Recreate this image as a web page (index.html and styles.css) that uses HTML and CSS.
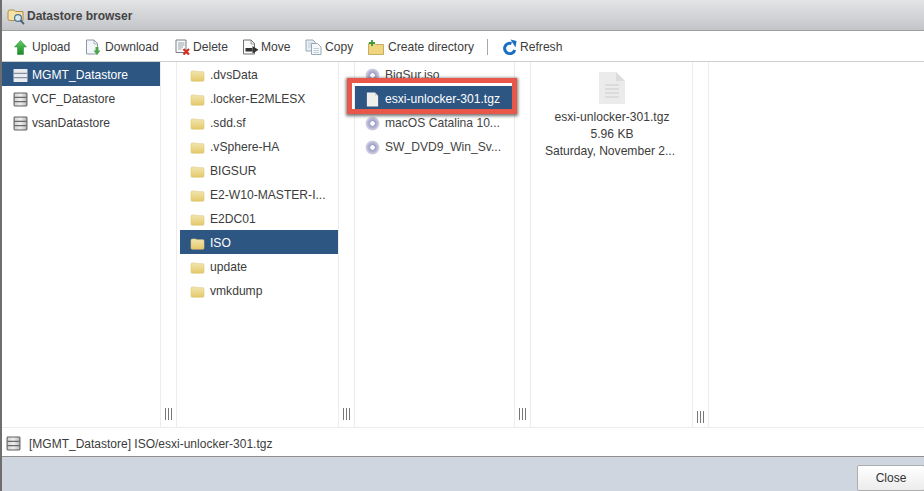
FILE: index.html
```html
<!DOCTYPE html>
<html lang="en">
<head>
<meta charset="utf-8">
<title>Datastore browser</title>
<link rel="stylesheet" href="styles.css">
</head>
<body>
<svg class="defs" width="0" height="0" aria-hidden="true">
  <defs>
    <linearGradient id="ds-fill" x1="0" x2="1" y1="0" y2="0">
      <stop offset="0" stop-color="#d0d0d0"/>
      <stop offset=".5" stop-color="#eeeeee"/>
      <stop offset="1" stop-color="#b8b8b8"/>
    </linearGradient>
    <linearGradient id="folder-fill" x1="0" x2="0" y1="0" y2="1">
      <stop offset="0" stop-color="#f3e6b0"/>
      <stop offset="1" stop-color="#e4c869"/>
    </linearGradient>
    <radialGradient id="disc-fill">
      <stop offset="0" stop-color="#ffffff"/>
      <stop offset=".3" stop-color="#ffffff"/>
      <stop offset=".35" stop-color="#9c9cc4"/>
      <stop offset=".7" stop-color="#b9b9d6"/>
      <stop offset="1" stop-color="#d6d6e6"/>
    </radialGradient>
    <linearGradient id="up-fill" x1="0" x2="0" y1="0" y2="1">
      <stop offset="0" stop-color="#62c95f"/>
      <stop offset="1" stop-color="#1c8a2a"/>
    </linearGradient>
    <symbol id="ds" viewBox="0 0 14 14">
      <rect x="1" y="1" width="12" height="12" rx=".8" fill="url(#ds-fill)" stroke="#5f5f5f"/>
      <path d="M1 5h12M1 9h12" stroke="#6a6a6a"/>
    </symbol>
    <symbol id="ds-sel" viewBox="0 0 14 14">
      <rect x=".5" y="1" width="13" height="12" rx=".5" fill="#e9ebee"/>
      <path d="M.5 5h13M.5 9h13" stroke="#8592a3"/>
    </symbol>
    <symbol id="folder" viewBox="0 0 15 13">
      <path d="M1 3.200Q1 2 2.200 2H6l.8 .7h6.200Q14 2.700 14 4v7q0 1.200-1.200 1.200H2.200Q1 12.200 1 11z" fill="url(#folder-fill)" stroke="#dcc678" stroke-width=".6"/>
    </symbol>
    <symbol id="disc" viewBox="0 0 16 16">
      <circle cx="8" cy="8" r="7.400" fill="url(#disc-fill)"/>
    </symbol>
    <symbol id="file" viewBox="0 0 14 16">
      <path d="M1 .5h8.500l3.500 3.500v11.500H1z" fill="#efefec"/>
      <path d="M9.500 .5v3.500h3.500z" fill="#d2d2d0"/>
    </symbol>
  </defs>
</svg>
<div class="dialog">
  <header class="titlebar">
    <svg class="title-icon" viewBox="0 0 18 18" width="18" height="18">
      <path d="M1 5Q1 3 3 3h4l1.500 1.500H16v9H3Q1 13.500 1 11.500z" fill="#f5e2a6" stroke="#b08f45"/>
      <circle cx="11" cy="11" r="3.400" fill="#d6e8f4" stroke="#4f7391" stroke-width="1.200"/>
      <path d="M13.500 13.500l3.500 3.500" stroke="#4d6275" stroke-width="1.800"/>
    </svg>
    <span>Datastore browser</span>
  </header>
  <div class="toolbar">
    <div class="tool tool-upload">
      <svg viewBox="0 0 13 15" width="13" height="15"><path d="M6.500 .5L12.500 7H9.500v7.500h-6V7H.5z" fill="url(#up-fill)" stroke="#258030" stroke-width=".5"/></svg>
      <span>Upload</span>
    </div>
    <div class="tool tool-download">
      <svg viewBox="0 0 17 17" width="17" height="17"><path d="M1.500 1h7.500l3.500 3.500V15h-11z" fill="#f3f7fa" stroke="#8c9aa7"/><path d="M9 1v4h3.500" fill="none" stroke="#8c9aa7" stroke-width=".7"/><path d="M10.500 8v3.500H8.500l3.500 4.500 3.500-4.500h-2V8z" fill="#4ba54a"/></svg>
      <span>Download</span>
    </div>
    <div class="tool tool-delete">
      <svg viewBox="0 0 16 16" width="16" height="16"><path d="M1 1h10v12.500H1z" fill="#fafafa" stroke="#77808a"/><path d="M3 4h6.500M3 6h6.500M3 8h5M3 10h3.500" stroke="#97a1ab"/><path d="M8.500 10l5.500 5.500M14 10l-5.500 5.500" stroke="#d42c20" stroke-width="2.200"/></svg>
      <span>Delete</span>
    </div>
    <div class="tool tool-move">
      <svg viewBox="0 0 17 16" width="17" height="16"><path d="M1.500 1h7.500l3.500 3.500v10.500h-11z" fill="#fbfbfb" stroke="#6f6f6f"/><path d="M9 1v4h3.500" fill="none" stroke="#6f6f6f" stroke-width=".7"/><rect x="3.500" y="9" width="7" height="3.500" fill="#333"/><path d="M10.500 7l6 3.800-6 3.800z" fill="#333"/></svg>
      <span>Move</span>
    </div>
    <div class="tool tool-copy">
      <svg viewBox="0 0 17 16" width="17" height="16"><path d="M1 1h7l2 2v9H1z" fill="#e9eff5" stroke="#98a7b5"/><path d="M3 4h5M3 6h5M3 8h5" stroke="#b9c5d0" stroke-width=".8"/><path d="M6.500 4.500h6l3.500 3.500v7.500H6.500z" fill="#f6f9fb" stroke="#98a7b5"/><path d="M8.500 9.500h5.500M8.500 11.500h5.500M8.500 13.500h5.500" stroke="#b4c0cb" stroke-width=".8"/></svg>
      <span>Copy</span>
    </div>
    <div class="tool tool-mkdir">
      <svg viewBox="0 0 16 15" width="16" height="15"><path d="M.5 3.500h6l1 1h8v10H.5z" fill="#efd57f" stroke="#b99d4a" stroke-width=".8"/><path d="M4 0v6M1 3h6" stroke="#3b9a3d" stroke-width="1.800"/></svg>
      <span>Create directory</span>
    </div>
    <div class="tool-sep"></div>
    <div class="tool tool-refresh">
      <svg viewBox="0 0 16 16" width="16" height="16"><path d="M10.500 4.500A5.200 5.200 0 1 0 13.800 11" fill="none" stroke="#1b6fc2" stroke-width="3"/><path d="M9.500 0.500l6 1.500-1 6.500z" fill="#1b6fc2"/></svg>
      <span>Refresh</span>
    </div>
  </div>
  <main class="browser">
    <section class="col col-1">
      <ul class="list">
        <li class="row row-ds selected"><svg class="ico"><use href="#ds-sel"/></svg>MGMT_Datastore</li>
        <li class="row row-ds"><svg class="ico"><use href="#ds"/></svg>VCF_Datastore</li>
        <li class="row row-ds"><svg class="ico"><use href="#ds"/></svg>vsanDatastore</li>
      </ul>
    </section>
    <div class="gutter"><span class="grip"></span></div>
    <section class="col col-2">
      <ul class="list">
        <li class="row"><svg class="ico"><use href="#folder"/></svg>.dvsData</li>
        <li class="row"><svg class="ico"><use href="#folder"/></svg>.locker-E2MLESX</li>
        <li class="row"><svg class="ico"><use href="#folder"/></svg>.sdd.sf</li>
        <li class="row"><svg class="ico"><use href="#folder"/></svg>.vSphere-HA</li>
        <li class="row"><svg class="ico"><use href="#folder"/></svg>BIGSUR</li>
        <li class="row"><svg class="ico"><use href="#folder"/></svg>E2-W10-MASTER-I...</li>
        <li class="row"><svg class="ico"><use href="#folder"/></svg>E2DC01</li>
        <li class="row selected"><svg class="ico"><use href="#folder"/></svg>ISO</li>
        <li class="row"><svg class="ico"><use href="#folder"/></svg>update</li>
        <li class="row"><svg class="ico"><use href="#folder"/></svg>vmkdump</li>
      </ul>
    </section>
    <div class="gutter"><span class="grip"></span></div>
    <section class="col col-3">
      <ul class="list">
        <li class="row"><svg class="ico"><use href="#disc"/></svg>BigSur.iso</li>
        <li class="row selected"><svg class="ico"><use href="#file"/></svg>esxi-unlocker-301.tgz</li>
        <li class="row"><svg class="ico"><use href="#disc"/></svg>macOS Catalina 10...</li>
        <li class="row"><svg class="ico"><use href="#disc"/></svg>SW_DVD9_Win_Sv...</li>
      </ul>
      <div class="annotation"></div>
    </section>
    <div class="gutter"><span class="grip"></span></div>
    <section class="col col-4">
      <svg class="preview" viewBox="0 0 26 32" width="26" height="32">
        <path d="M0 0h17l9 9v23H0z" fill="#ebebeb"/>
        <path d="M17 0v9h9z" fill="#dcdcdc"/>
        <path d="M6 13h14M6 17h14M6 21h14M6 25h14" stroke="#d6d6d6" stroke-width="1.500"/>
      </svg>
      <p class="meta">esxi-unlocker-301.tgz</p>
      <p class="meta">5.96 KB</p>
      <p class="meta meta-date">Saturday, November 2...</p>
    </section>
    <div class="gutter gutter-last"><span class="grip"></span></div>
    <section class="col col-5"></section>
  </main>
  <div class="status">
    <svg class="ico"><use href="#ds"/></svg>
    <span>[MGMT_Datastore] ISO/esxi-unlocker-301.tgz</span>
  </div>
  <footer class="footer">
    <button class="close" type="button">Close</button>
  </footer>
</div>
</body>
</html>
```
FILE: styles.css
```css
* {
  box-sizing: border-box;
}
html, body {
  margin: 0;
  padding: 0;
  height: 100%;
  overflow: hidden;
}
body {
  font-family: "Liberation Sans", Arial, sans-serif;
  font-size: 12.1px;
  color: #3c3c3c;
  background: #fff;
}
.defs {
  position: absolute;
}
.dialog {
  display: flex;
  flex-direction: column;
  width: 924px;
  height: 491px;
  border-left: 2px solid #6e6e6e;
}
.titlebar {
  display: flex;
  align-items: center;
  gap: 2px;
  height: 31px;
  padding: 2px 0 0 5px;
  font-weight: bold;
  font-size: 12px;
  color: #444;
  background: linear-gradient(#e3e4e6, #c4c5c8);
  border-bottom: 1px solid #a0a0a0;
}
.toolbar {
  display: flex;
  align-items: center;
  height: 32px;
  padding: 3px 0 0 12px;
  border-bottom: 1px solid #cfcfcf;
  background: #fff;
}
.tool {
  display: flex;
  align-items: center;
  gap: 5px;
  white-space: nowrap;
}
.tool-upload { width: 71px; }
.tool-download { width: 90px; gap: 3px; }
.tool-delete { width: 67px; gap: 2px; }
.tool-move { width: 63px; gap: 2px; }
.tool-copy { width: 63px; gap: 3px; }
.tool-mkdir { gap: 4px; }
.tool-refresh { gap: 3px; }
.tool-sep {
  width: 1px;
  height: 16px;
  margin: 0 13px;
  background: #a8a8a8;
}
.browser {
  display: flex;
  flex: none;
  height: 365px;
}
.col {
  position: relative;
  flex: none;
  height: 100%;
}
.col-1 { width: 158px; }
.col-2 { width: 161px; padding-left: 3px; }
.col-3 { width: 159px; }
.col-4 {
  width: 161px;
  text-align: center;
  padding: 10px 0 0 1px;
}
.col-5 { flex: 1; }
.gutter {
  display: flex;
  align-items: flex-end;
  justify-content: center;
  flex: none;
  width: 17px;
  height: 100%;
  padding-bottom: 7px;
  border-left: 1px solid #ececec;
  border-right: 1px solid #ececec;
}
.gutter-last {
  padding-bottom: 4px;
}
.grip {
  display: block;
  width: 7px;
  height: 12px;
  border-left: 1px solid #777;
  border-right: 1px solid #777;
  background: linear-gradient(#777, #777) center / 1px 100% no-repeat;
}
.list {
  list-style: none;
  margin: 0;
  padding: 0;
}
.row {
  display: flex;
  align-items: center;
  height: 24px;
  padding: 2px 0 0 10px;
  gap: 6px;
  white-space: nowrap;
}
.row-ds {
  padding-left: 11px;
  gap: 4px;
}
.col-2 .row {
  gap: 5px;
  padding-left: 10px;
}
.col-3 .row {
  padding-left: 10px;
  gap: 5px;
  color: #444;
}
.ico {
  flex: none;
  width: 15px;
  height: 15px;
}
.selected {
  color: #fff !important;
  background: #2d5682;
}
.annotation {
  position: absolute;
  left: -8px;
  top: 16px;
  width: 170px;
  height: 36px;
  border: 5px solid #e8574a;
  box-shadow: 0 1px 3px 1px rgba(0, 0, 0, .55);
  pointer-events: none;
}
.preview {
  display: block;
  margin: 0 auto 5px;
}
.meta {
  margin: 0;
  line-height: 17px;
  white-space: nowrap;
}
.meta-date {
  margin-left: -4px;
}
.status {
  display: flex;
  align-items: center;
  gap: 8px;
  height: 30px;
  padding: 3px 0 0 4px;
  font-size: 12px;
  border-top: 1px solid #ececec;
  border-bottom: 1px solid #8f8f8f;
}
.footer {
  display: flex;
  justify-content: flex-end;
  flex: 1;
  padding: 8px 0 0 0;
  background: #d0d6df;
}
.close {
  width: 68px;
  height: 26px;
  margin-right: -1px;
  padding: 0;
  font: 12px "Liberation Sans", Arial, sans-serif;
  color: #333;
  background: linear-gradient(#fff, #ececec);
  border: 1px solid #aeaeae;
  border-radius: 2px;
}
```
